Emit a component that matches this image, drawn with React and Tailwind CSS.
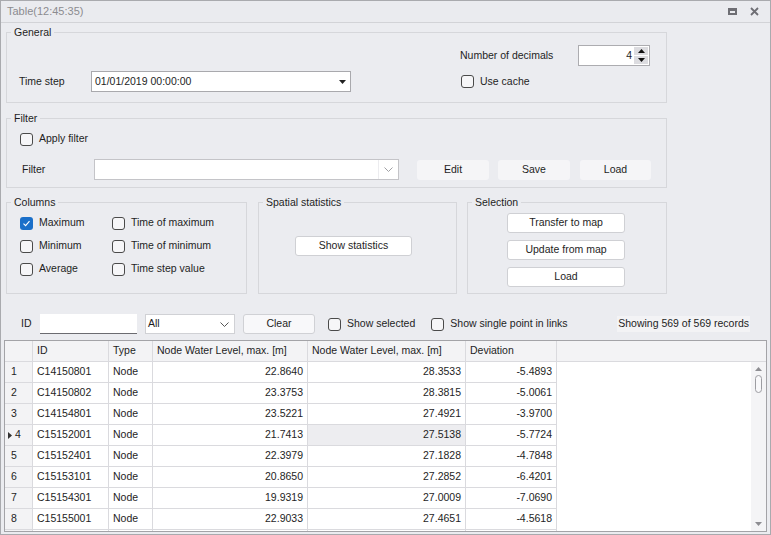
import React from "react";

const rows = [
	["1", "C14150801", "Node", "22.8640", "28.3533", "-5.4893"],
	["2", "C14150802", "Node", "23.3753", "28.3815", "-5.0061"],
	["3", "C14154801", "Node", "23.5221", "27.4921", "-3.9700"],
	["4", "C15152001", "Node", "21.7413", "27.5138", "-5.7724"],
	["5", "C15152401", "Node", "22.3979", "27.1828", "-4.7848"],
	["6", "C15153101", "Node", "20.8650", "27.2852", "-6.4201"],
	["7", "C15154301", "Node", "19.9319", "27.0009", "-7.0690"],
	["8", "C15155001", "Node", "22.9033", "27.4651", "-4.5618"],
	["", "", "", "", "", ""]
];

function CheckBox({ label, checked, className = "" }) {
	return (
		<div className={"flex items-center h-[16px] " + className}>
			{checked ? (
				<div className="w-[13px] h-[13px] rounded-[3px] bg-[#1a6fc9] flex items-center justify-center">
					<svg width="9" height="9" viewBox="0 0 9 9">
						<path d="M1.5 4.6 L3.6 6.6 L7.5 2.2" fill="none" stroke="#fff" strokeWidth="1.1" />
					</svg>
				</div>
			) : (
				<div className="w-[13px] h-[13px] rounded-[3px] border border-[#4a4a4a] bg-[#f6f6f8]" />
			)}
			<span className="ml-[6px] whitespace-nowrap">{label}</span>
		</div>
	);
}

function Group({ title, className = "", children }) {
	return (
		<fieldset className={"border border-[#d6d7db] " + className}>
			<legend className="ml-[4px] px-[3px] leading-[16px] text-[#1e1e1e]">{title}</legend>
			{children}
		</fieldset>
	);
}

function Btn({ label, className = "" }) {
	return (
		<div className={"h-[20px] flex items-center justify-center rounded-[3px] " + className}>
			{label}
		</div>
	);
}

function Cell({ children, className = "" }) {
	return (
		<div className={"h-[21px] flex items-center px-[4px] border-r border-b border-[#dadade] whitespace-nowrap " + className}>
			{children}
		</div>
	);
}

export default function App() {
	return (
		<div className="w-[771px] h-[535px] bg-[#ebecf0] border border-[#a9aaae] font-['Liberation_Sans',Arial,sans-serif] text-[10.5px] text-[#1e1e1e] flex flex-col overflow-hidden">
			{/* title */}
			<div className="h-[22px] shrink-0 flex items-center px-[6px] bg-[#eaebef] border-b border-[#d2d3d7]">
				<span className="text-[#8c8c90] text-[11px]">Table(12:45:35)</span>
				<div className="ml-auto flex items-center gap-[13px] mr-[5px]">
					<div className="w-[9px] h-[7px] border-2 border-[#6e6e74] border-t-[3px]" />
					<svg width="9" height="9" viewBox="0 0 9 9">
						<path d="M1 1 L8 8 M8 1 L1 8" stroke="#6e6e74" strokeWidth="1.8" />
					</svg>
				</div>
			</div>

			{/* General */}
			<Group title="General" className="ml-[5px] mt-[1px] w-[661px] h-[79px]">
				<div className="flex items-center h-[21px] mt-[5px]">
					<span className="ml-[453px] w-[118px]">Number of decimals</span>
					<div className="w-[72px] h-[21px] bg-white border border-[#acacb0] flex items-center">
						<span className="ml-auto mr-[2px]">4</span>
						<div className="w-[14px] h-[17px] mr-[1px] flex flex-col gap-[1px]">
							<div className="flex-1 bg-[#dcdce0] flex items-center justify-center">
								<svg width="7" height="4" viewBox="0 0 7 4"><path d="M0 4 L3.5 0 L7 4Z" fill="#111" /></svg>
							</div>
							<div className="flex-1 bg-[#dcdce0] flex items-center justify-center">
								<svg width="7" height="4" viewBox="0 0 7 4"><path d="M0 0 L3.5 4 L7 0Z" fill="#111" /></svg>
							</div>
						</div>
					</div>
				</div>
				<div className="flex items-center h-[21px] mt-[5px]">
					<span className="ml-[12px] w-[72px]">Time step</span>
					<div className="w-[260px] h-[21px] bg-white border border-[#a9a9ad] flex items-center pl-[3px]">
						<span>01/01/2019 00:00:00</span>
						<svg className="ml-auto mr-[4px]" width="7" height="4" viewBox="0 0 7 4"><path d="M0 0 L3.5 4 L7 0Z" fill="#222" /></svg>
					</div>
					<CheckBox label="Use cache" className="ml-[110px]" />
				</div>
			</Group>

			{/* Filter */}
			<Group title="Filter" className="ml-[5px] mt-[7px] w-[661px] h-[78px]">
				<CheckBox label="Apply filter" className="ml-[13px] mt-[5px]" />
				<div className="flex items-center h-[21px] mt-[12px]">
					<span className="ml-[15px] w-[72px]">Filter</span>
					<div className="w-[305px] h-[21px] bg-white border border-[#c4c4c8] flex items-center">
						<div className="flex-1 h-full border-r border-[#ececef]" />
						<svg className="mx-[5px]" width="9" height="5" viewBox="0 0 9 5"><path d="M0.5 0.5 L4.5 4.5 L8.5 0.5" fill="none" stroke="#a0a0a4" /></svg>
					</div>
					<Btn label="Edit" className="ml-[18px] w-[72px] bg-[#f5f5f7]" />
					<Btn label="Save" className="ml-[9px] w-[72px] bg-[#f5f5f7]" />
					<Btn label="Load" className="ml-[10px] w-[71px] bg-[#f5f5f7]" />
				</div>
			</Group>

			{/* three groups */}
			<div className="flex ml-[5px] mt-[6px] h-[100px] shrink-0">
				<Group title="Columns" className="w-[241px] h-[100px]">
					<div className="flex mt-[5px] ml-[13px]">
						<div className="flex flex-col gap-[7px] w-[92px]">
							<CheckBox label="Maximum" checked />
							<CheckBox label="Minimum" />
							<CheckBox label="Average" />
						</div>
						<div className="flex flex-col gap-[7px]">
							<CheckBox label="Time of maximum" />
							<CheckBox label="Time of minimum" />
							<CheckBox label="Time step value" />
						</div>
					</div>
				</Group>
				<Group title="Spatial statistics" className="ml-[11px] w-[199px] h-[100px]">
					<Btn label="Show statistics" className="ml-[36px] mt-[26px] w-[117px] bg-white border border-[#cfd0d4]" />
				</Group>
				<Group title="Selection" className="ml-[10px] w-[200px] h-[100px]">
					<div className="flex flex-col gap-[7px] ml-[39px] mt-[3px]">
						<Btn label="Transfer to map" className="w-[118px] bg-white border border-[#cfd0d4]" />
						<Btn label="Update from map" className="w-[118px] bg-white border border-[#cfd0d4]" />
						<Btn label="Load" className="w-[118px] bg-white border border-[#cfd0d4]" />
					</div>
				</Group>
			</div>

			{/* toolbar */}
			<div className="flex items-center h-[20px] mt-[20px] shrink-0">
				<span className="ml-[20px] w-[19px]">ID</span>
				<div className="w-[97px] h-[20px] bg-white border-b border-[#6b6b70]" />
				<div className="ml-[8px] w-[90px] h-[20px] bg-white border border-[#d0d1d5] flex items-center pl-[2px]">
					<span>All</span>
					<svg className="ml-auto mr-[5px]" width="9" height="5" viewBox="0 0 9 5"><path d="M0.5 0.5 L4.5 4.5 L8.5 0.5" fill="none" stroke="#555" /></svg>
				</div>
				<Btn label="Clear" className="ml-[8px] w-[72px] bg-[#f8f8fa] border border-[#d0d1d5]" />
				<CheckBox label="Show selected" className="ml-[13px]" />
				<CheckBox label="Show single point in links" className="ml-[16px]" />
				<span className="ml-auto mr-[20px] px-[1px] bg-[#f3f3f5]">Showing 569 of 569 records</span>
			</div>

			{/* grid */}
			<div className="mx-[3px] mt-[6px] flex-1 mb-[2px] border border-[#a3a3a7] bg-white flex flex-col overflow-hidden">
				<div className="grid grid-cols-[28px_76px_44px_155px_158px_91px_1fr] bg-[#f3f3f5] shrink-0">
					<Cell />
					<Cell>ID</Cell>
					<Cell>Type</Cell>
					<Cell>Node Water Level, max. [m]</Cell>
					<Cell>Node Water Level, max. [m]</Cell>
					<Cell>Deviation</Cell>
					<div className="h-[21px] border-b border-[#dadade]" />
				</div>
				<div className="flex flex-1 overflow-hidden">
					<div className="flex-1 overflow-hidden">
						{rows.map((r, i) => (
							<div key={i} className="grid grid-cols-[28px_76px_44px_155px_158px_91px]">
								<Cell className="bg-[#f3f3f5] pl-[6px]">
									{r[0] === "4" ? (
										<span className="flex items-center gap-[3px] ml-[-3px]">
											<svg width="4" height="7" viewBox="0 0 4 7"><path d="M0 0 L4 3.5 L0 7Z" fill="#333" /></svg>
											4
										</span>
									) : r[0]}
								</Cell>
								<Cell>{r[1]}</Cell>
								<Cell>{r[2]}</Cell>
								<Cell className="justify-end">{r[3]}</Cell>
								<Cell className={"justify-end" + (r[0] === "4" ? " bg-[#ededf0]" : "")}>{r[4]}</Cell>
								<Cell className="justify-end">{r[5]}</Cell>
							</div>
						))}
					</div>
					<div className="w-[15px] bg-[#f4f4f6] flex flex-col items-center">
						<svg className="mt-[5px]" width="7" height="4" viewBox="0 0 7 4"><path d="M0 4 L3.5 0 L7 4Z" fill="#8d8d92" /></svg>
						<div className="mt-[4px] w-[7px] h-[18px] rounded-full border border-[#9d9da2] bg-[#f8f8fa]" />
						<svg className="mt-auto mb-[5px]" width="7" height="4" viewBox="0 0 7 4"><path d="M0 0 L3.5 4 L7 0Z" fill="#8d8d92" /></svg>
					</div>
				</div>
			</div>
		</div>
	);
}
